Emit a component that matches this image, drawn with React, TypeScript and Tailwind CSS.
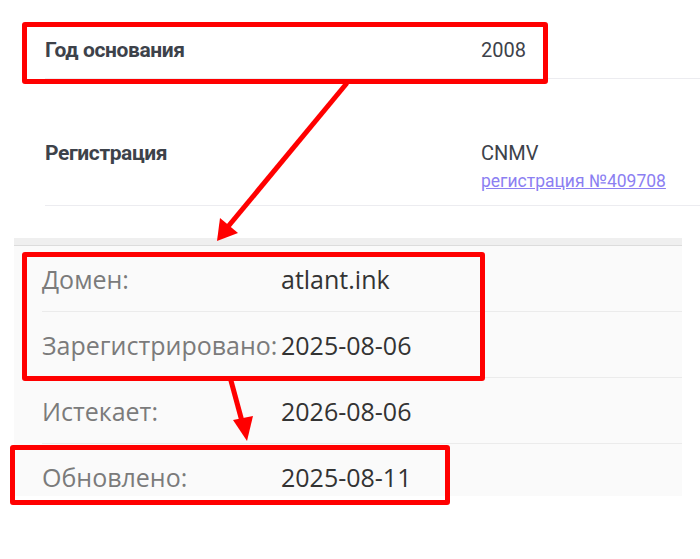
import React from "react";

const companyRows = [
  { label: "Год основания", value: "2008" },
];

const whoisRows = [
  { label: "Домен:", value: "atlant.ink" },
  { label: "Зарегистрировано:", value: "2025-08-06" },
  { label: "Истекает:", value: "2026-08-06" },
  { label: "Обновлено:", value: "2025-08-11" },
];

function Arrows() {
  return (
    <svg
      className="pointer-events-none absolute left-0 top-0"
      width="700"
      height="559"
      viewBox="0 0 700 559"
    >
      <line x1="347" y1="83" x2="226" y2="229" stroke="#ff0000" strokeWidth="5" />
      <polygon points="217,241 220,218 238,233" fill="#ff0000" />
      <line x1="230" y1="377" x2="243" y2="425" stroke="#ff0000" strokeWidth="5" />
      <polygon points="247,441 233,420 253,416" fill="#ff0000" />
    </svg>
  );
}

export default function App() {
  return (
    <div className="relative h-[559px] w-[700px] overflow-hidden bg-white">
      {/* company card */}
      <div className="font-['Roboto',sans-serif] text-[#3d424a]">
        {companyRows.map((row) => (
          <div
            key={row.label}
            className="ml-[45px] flex border-b border-[#ececf0] pb-[16px] pt-[38px] leading-[24px]"
          >
            <div className="w-[436px] text-[21px] font-bold tracking-[-0.4px]">{row.label}</div>
            <div className="text-[20px]">{row.value}</div>
          </div>
        ))}
        <div className="ml-[45px] flex border-b border-[#ececf0] pb-[14px] pt-[62px]">
          <div className="w-[436px] text-[21px] font-bold leading-[24px] tracking-[-0.4px]">
            Регистрация
          </div>
          <div className="flex flex-col gap-[6px]">
            <span className="text-[20px] leading-[24px]">CNMV</span>
            <a href="#" className="text-[17.5px] leading-[20px] text-[#8c7ff2] underline">
              регистрация №409708
            </a>
          </div>
        </div>
      </div>

      {/* whois block */}
      <div className="ml-[14px] mt-[32px] w-[668px] bg-[#fafafa] font-['Open_Sans',sans-serif]">
        <div className="h-[8px] border-b border-[#dcdcdc] bg-[#efefef]" />
        {whoisRows.map((row, i) => (
          <div
            key={row.label}
            className={
              i < whoisRows.length - 1
                ? "ml-[28px] flex h-[66px] border-b border-[#ebebeb] pt-[19px] leading-[28px]"
                : "ml-[28px] flex h-[52px] pt-[19px] leading-[28px]"
            }
          >
            <div className="w-[239px] shrink-0 whitespace-nowrap text-[25px] text-[#7b7b7b]">
              {row.label}
            </div>
            <div className="text-[25px] text-[#333333]">{row.value}</div>
          </div>
        ))}
      </div>

      {/* annotations */}
      <div className="absolute left-[22px] top-[22px] h-[62px] w-[526px] rounded-[3px] border-[5px] border-[#ff0000]" />
      <div className="absolute left-[22px] top-[252px] h-[129px] w-[463px] rounded-[3px] border-[5px] border-[#ff0000]" />
      <div className="absolute left-[10px] top-[445px] h-[60px] w-[440px] rounded-[3px] border-[5px] border-[#ff0000]" />
      <Arrows />
    </div>
  );
}
